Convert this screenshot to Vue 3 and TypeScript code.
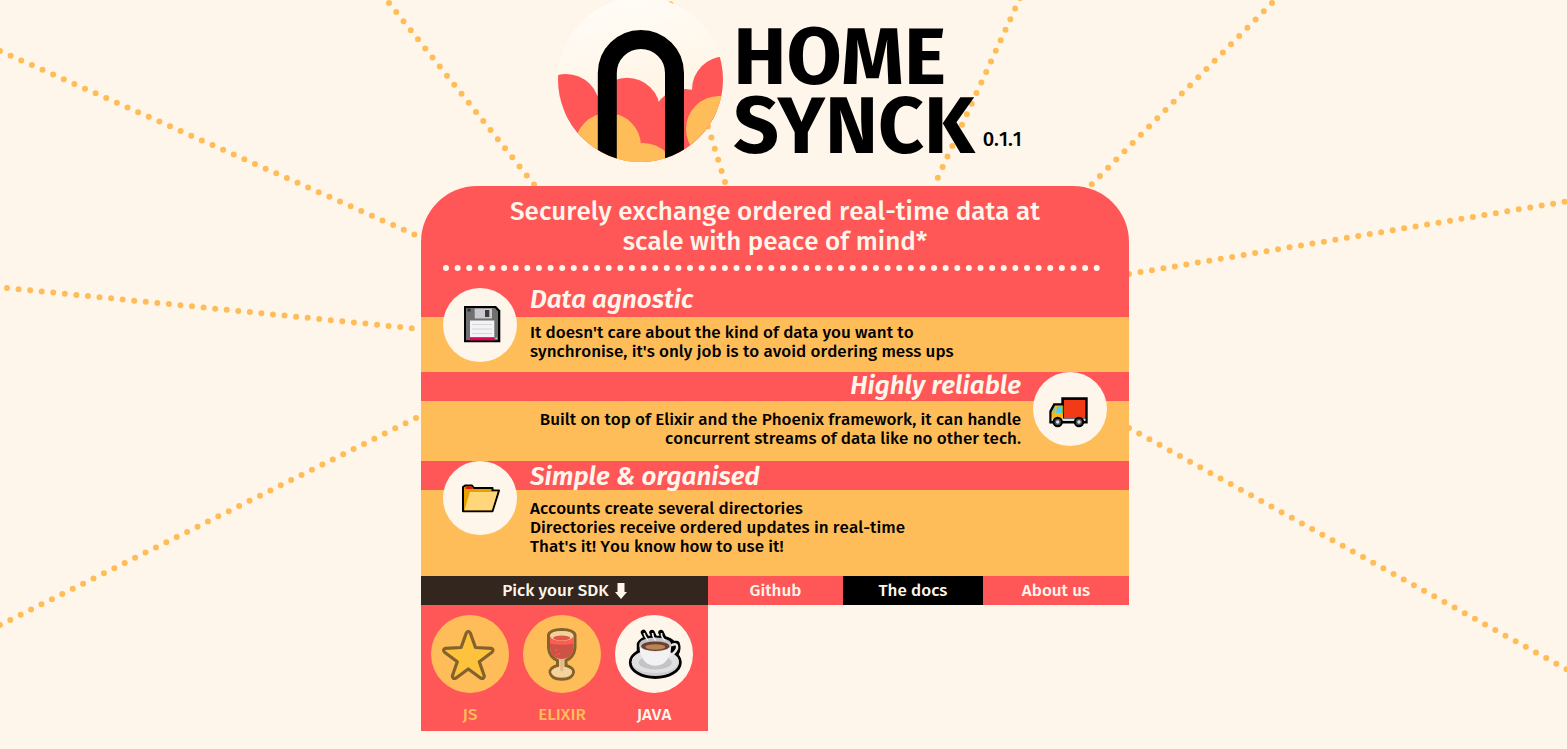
<script setup lang="ts">
import { ref } from 'vue'

interface Ray {
  x1: number
  y1: number
  x2: number
  y2: number
}

interface Feature {
  id: string
  title: string
  lines: string[]
}

interface Sdk {
  id: string
  label: string
}

const rays: Ray[] = [
  { x1: 0, y1: 51, x2: 420, y2: 237 },
  { x1: 7, y1: 288, x2: 420, y2: 329 },
  { x1: 416, y1: 418, x2: -6, y2: 628 },
  { x1: 389, y1: 3, x2: 540, y2: 192 },
  { x1: 725, y1: 182, x2: 668, y2: -4 },
  { x1: 1020, y1: -2, x2: 934, y2: 186 },
  { x1: 1272, y1: 3, x2: 1084, y2: 192 },
  { x1: 1129, y1: 274, x2: 1575, y2: 200 },
  { x1: 1129, y1: 428, x2: 1575, y2: 674 },
]

const features: Feature[] = [
  {
    id: 'agnostic',
    title: 'Data agnostic',
    lines: ["It doesn't care about the kind of data you want to", "synchronise, it's only job is to avoid ordering mess ups"],
  },
  {
    id: 'reliable',
    title: 'Highly reliable',
    lines: ['Built on top of Elixir and the Phoenix framework, it can handle', 'concurrent streams of data like no other tech.'],
  },
  {
    id: 'simple',
    title: 'Simple & organised',
    lines: ['Accounts create several directories', 'Directories receive ordered updates in real-time', "That's it! You know how to use it!"],
  },
]

const sdks: Sdk[] = [
  { id: 'js', label: 'JS' },
  { id: 'elixir', label: 'ELIXIR' },
  { id: 'java', label: 'JAVA' },
]

const open = ref(true)
const active = ref('java')
</script>

<template>
  <div class="page">
    <svg class="rays" viewBox="0 0 1567 749" preserveAspectRatio="xMidYMin slice" aria-hidden="true">
      <line v-for="(r, i) in rays" :key="i" :x1="r.x1" :y1="r.y1" :x2="r.x2" :y2="r.y2" />
    </svg>

    <header class="brand">
      <svg class="logo" viewBox="0 0 165 165" role="img" aria-label="Home Synck logo">
        <defs>
          <linearGradient id="sky" x1="0.4" y1="0" x2="0.6" y2="1">
            <stop offset="0" stop-color="#fffcf7" />
            <stop offset="0.5" stop-color="#fff6e8" />
          </linearGradient>
          <clipPath id="disc"><circle cx="82.5" cy="82.5" r="82.5" /></clipPath>
        </defs>
        <g clip-path="url(#disc)">
          <rect width="165" height="165" fill="url(#sky)" />
          <g fill="#ff5757">
            <circle cx="8" cy="110.5" r="33.5" />
            <circle cx="69" cy="114" r="33.2" />
            <circle cx="127" cy="126" r="34" />
            <circle cx="167" cy="92.5" r="33" />
            <rect y="115" width="165" height="50" />
          </g>
          <g fill="#ffbd59">
            <circle cx="50" cy="149" r="33" />
            <circle cx="85" cy="179" r="33" />
            <circle cx="161" cy="132" r="33" />
          </g>
          <path d="M49.3 170V76a33.6 33.6 0 0 1 67.2 0V170" fill="none" stroke="#000" stroke-width="19" />
        </g>
      </svg>
      <h1 class="name">HOME<br />SYNCK</h1>
      <span class="version">0.1.1</span>
    </header>

    <main class="panel">
      <section class="intro">
        <p class="tagline">Securely exchange ordered real-time data at scale with peace of mind*</p>
        <svg class="dots" aria-hidden="true"><line x1="3" y1="3" x2="100%" y2="3" /></svg>
      </section>

      <article v-for="f in features" :key="f.id" class="feature" :class="f.id">
        <div class="badge">
          <svg v-if="f.id === 'agnostic'" viewBox="0 0 74 74" aria-hidden="true">
            <path d="M21 18H53L57.300 22.500V54.300H21Z" fill="#000" />
            <path d="M23 20H52L55 23.500V52.300H23Z" fill="#707070" />
            <path d="M24.500 20.500h3v3h-3z" fill="#333" />
            <path d="M31.700 20.500H49v10H31.700z" fill="#c9c9cf" />
            <path d="M42 22h4.300v7H42z" fill="#3d3935" />
            <path d="M27 32.500h24.300v17H27z" fill="#f3f3f5" />
            <path d="M29 36.500h20M29 41h20M29 45.500h20" stroke="#d5d5da" stroke-width="1" />
            <path d="M27 49.300h24.300v3H27z" fill="#e5005c" />
            <path d="M52.500 49.500h1.500v1.500h-1.500z" fill="#ccc" />
          </svg>
          <svg v-else-if="f.id === 'reliable'" viewBox="0 0 74 74" aria-hidden="true">
            <path d="M28.300 25.300H54.700V51.600H16.300V39L20.500 31.300H28.300Z" fill="#000" />
            <path d="M31 28h21.300v18H31z" fill="#f23a17" />
            <path d="M22 33.500H30V47H18.500V40Z" fill="#fdb913" />
            <path d="M24 34.500h5.500v6.500H23z" fill="#50cdf5" />
            <path d="M21.500 35.500l1 0-1.500 5h-2z" fill="#50cdf5" />
            <path d="M29 34h1.300v8H29z" fill="#7ab51d" />
            <path d="M18.500 46.500H52.500V49H18.500z" fill="#dedede" />
            <g fill="#4b4b4b" stroke="#000" stroke-width="2">
              <circle cx="24.700" cy="50" r="4.200" />
              <circle cx="46" cy="50" r="4.200" />
            </g>
            <circle cx="24.700" cy="50" r="1.700" fill="#ddd" />
            <circle cx="46" cy="50" r="1.700" fill="#ddd" />
          </svg>
          <svg v-else viewBox="0 0 74 74" aria-hidden="true">
            <path d="M20 50.300V26l2-1.500h7l2 2.500h18.500v2.500H56L49.500 50.300Z" fill="#e8a200" stroke="#000" stroke-width="2" stroke-linejoin="round" />
            <path d="M22.500 25.500h6l1.500 2.500h-7.500z" fill="#e81224" />
            <path d="M27 31H48L50 30.500H54.500L48.800 49.300H21.500Z" fill="#ffd67a" />
          </svg>
        </div>
        <div class="copy">
          <h2>{{ f.title }}</h2>
          <p><span v-for="line in f.lines" :key="line">{{ line }}</span></p>
        </div>
      </article>

      <nav class="bar">
        <button type="button" class="pick" :aria-expanded="open" @click="open = !open">
          Pick your SDK
          <svg viewBox="0 0 12 16" aria-hidden="true"><path d="M2.500 0h7v9H12L6 16 0 9h2.500z" /></svg>
        </button>
        <a href="#github">Github</a>
        <a href="#docs" class="docs">The docs</a>
        <a href="#about">About us</a>
        <div v-if="open" class="sdks">
          <button
            v-for="s in sdks"
            :key="s.id"
            type="button"
            class="sdk"
            :class="{ active: s.id === active }"
            @click="active = s.id"
          >
            <span class="disc">
              <svg v-if="s.id === 'js'" viewBox="0 0 78 78" aria-hidden="true">
                <path d="M35.300 18Q37.300 14.500 39.300 18L44.500 32.500L60 33.300Q63.500 34.500 61 37.300L48.300 46.700L53.300 61Q53 64.500 49.500 63L37.300 54L25.100 63Q21.500 64.500 21.300 61L26.300 46.700L13.600 37.300Q11.100 34.500 14.600 33.300L30.100 32.500Z" fill="#ffc23c" stroke="#83622d" stroke-width="3.200" stroke-linejoin="round" />
              </svg>
              <svg v-else-if="s.id === 'elixir'" viewBox="0 0 78 78" aria-hidden="true">
                <path d="M25.500 20Q27 14.500 38.700 14.500Q50.500 14.500 52 20V33Q51 42 43 45.500V50.500Q50.500 52.500 50.500 57.500Q49 64.300 38.700 64.300Q28.500 64.300 27 57.500Q27 52.500 34.500 50.500V45.500Q26.500 42 25.500 33Z" fill="#f0c98e" stroke="#83622d" stroke-width="3" />
                <path d="M27 21H50.500V33Q49 44 38.700 44Q28.500 44 27 33Z" fill="#ff5c54" />
                <path d="M27 28.500Q38.700 31 50.500 28.500V33Q49 44 38.700 44Q28.500 44 27 33Z" fill="#ce5344" />
                <ellipse cx="38.700" cy="21" rx="11.700" ry="4.800" fill="#f2d19a" />
                <ellipse cx="38.700" cy="23" rx="8.500" ry="2.600" fill="#df5749" />
                <ellipse cx="38.700" cy="57" rx="10.500" ry="5" fill="#f5d39d" />
                <path d="M37.300 44h3v12h-3z" fill="#dfb988" />
                <g fill="#ff5757"><circle cx="33" cy="35" r="1" /><circle cx="36" cy="39" r="1" /><circle cx="33" cy="40" r="0.800" /></g>
              </svg>
              <svg v-else viewBox="0 0 78 78" aria-hidden="true">
                <g fill="#000" stroke="#000" stroke-width="5.500" stroke-linejoin="round" stroke-linecap="round">
                  <ellipse cx="40.300" cy="47.500" rx="23.700" ry="13.700" />
                  <path d="M24.500 40V29Q27 25 33 23.500H48Q55 25 58 28.500L62 28.500Q64 34 61 39L56 45H27Z" />
                  <path d="M28.500 17.500L32 24M37 17.500L40 24M46 17.500L49 24" />
                </g>
                <ellipse cx="40.300" cy="47.500" rx="23.700" ry="13.500" fill="#cfcfd2" />
                <ellipse cx="40.300" cy="46.500" rx="23.500" ry="11.500" fill="#e0e0e2" />
                <ellipse cx="40.300" cy="47.500" rx="16.500" ry="7" fill="#c4c4c7" />
                <path d="M56 30.500Q63 27 62 33.500Q60 38.500 53 42" fill="none" stroke="#e9e9eb" stroke-width="2.400" />
                <path d="M24.300 30Q24.500 43 32 48.500Q40.300 53 48.500 48.500Q56 43 56.300 30Z" fill="#f2f2f3" />
                <ellipse cx="40.300" cy="29.500" rx="16" ry="7" fill="#c2c4c8" />
                <ellipse cx="40.300" cy="31.200" rx="14" ry="4.800" fill="#6e3f2a" />
                <ellipse cx="40.300" cy="32" rx="10" ry="2.700" fill="#b98557" />
                <path d="M29 18Q30 22 33 25.500M37.500 18Q37.500 22 41 25.500M46.500 18Q46 22 50 25.500" fill="none" stroke="#eeeeef" stroke-width="1.600" />
              </svg>
            </span>
            <span class="label">{{ s.label }}</span>
          </button>
        </div>
      </nav>
    </main>
  </div>
</template>

<style>
body {
  margin: 0;
  background: #fff6eb;
}
</style>

<style scoped>
.page {
  position: relative;
  box-sizing: border-box;
  min-height: 100vh;
  padding: 0 17px 18px 0;
  overflow: hidden;
  color: #000;
  font-family: 'Fira Sans', 'Noto Sans', 'Open Sans', sans-serif;
  font-size: 17px;
  font-weight: 500;
  font-kerning: none;
}

.rays {
  position: absolute;
  inset: 0;
  width: 100%;
  height: 100%;
}

.rays line,
.dots line {
  stroke: #ffbd59;
  stroke-width: 6;
  stroke-linecap: round;
  stroke-dasharray: 0 11.62;
}

.brand {
  position: relative;
  display: flex;
  justify-content: center;
  align-items: flex-end;
  box-sizing: border-box;
  height: 186px;
  padding: 0 0 24px 30px;
}

.logo {
  flex: none;
  width: 165px;
  height: 165px;
  margin-right: 10px;
}

.name {
  margin: 0 0 1px;
  font-size: 80px;
  font-weight: 700;
  font-kerning: normal;
  line-height: 69px;
}

.version {
  margin: 0 0 9px 8px;
  font-size: 20px;
  line-height: 28px;
}

.panel {
  position: relative;
  width: 100%;
  max-width: 708px;
  margin: 0 auto;
}

.intro {
  padding: 11px 22px 17px;
  border-radius: 56px 56px 0 0;
  background: #ff5757;
}

.tagline {
  max-width: 560px;
  margin: 0 auto 8px;
  color: #fff6eb;
  font-size: 26px;
  line-height: 30px;
  text-align: center;
}

.dots {
  display: block;
  width: 100%;
  height: 6px;
}

.dots line {
  stroke: #fff6eb;
}

.feature {
  display: flex;
  gap: 13px;
  padding: 0 22px;
  background: linear-gradient(#ff5757 29px, #ffbd59 29px);
}

.badge {
  flex: none;
  width: 74px;
  height: 74px;
  border-radius: 50%;
  background: #fff6eb;
}

.badge svg,
.disc svg {
  display: block;
  width: 100%;
  height: 100%;
}

.copy {
  flex: 1;
}

.copy h2 {
  height: 29px;
  margin: 0;
  color: #fff6eb;
  font-size: 26px;
  font-style: italic;
  font-weight: 600;
  line-height: 24px;
}

.copy p {
  margin: 0;
  padding: 6px 0 11px;
  line-height: 19px;
}

.copy p span {
  display: block;
}

.reliable {
  flex-direction: row-reverse;
  gap: 12px;
  text-align: right;
}

.reliable h2 {
  line-height: 28px;
}

.reliable p {
  padding: 9px 0 13px;
}

.simple h2 {
  line-height: 32px;
}

.simple p {
  padding: 9px 0 20px;
}

.bar {
  display: grid;
  grid-template-columns: 287fr 135fr 140fr 146fr;
  line-height: 29px;
  text-align: center;
}

.bar a,
.pick {
  height: 29px;
  background: #ff5757;
  color: #fff6eb;
  text-decoration: none;
}

.bar .docs {
  background: #000;
}

.bar button {
  border: 0;
  padding: 0;
  font: inherit;
  font-kerning: none;
  cursor: pointer;
}

.bar .pick {
  display: flex;
  align-items: center;
  justify-content: center;
  gap: 6px;
  background: #33261f;
}

.pick svg {
  width: 12px;
  height: 16px;
  fill: #fff6eb;
}

.sdks {
  display: flex;
  gap: 14px;
  box-sizing: border-box;
  height: 126px;
  padding: 10px;
  background: #ff5757;
}

.bar .sdk {
  display: flex;
  flex-direction: column;
  align-items: center;
  gap: 12px;
  width: 78px;
  background: none;
  color: #ffbd59;
  line-height: 20px;
}

.disc {
  flex: none;
  width: 78px;
  height: 78px;
  border-radius: 50%;
  background: #ffbd59;
}

.bar .active {
  color: #fff6eb;
}

.active .disc {
  background: #fff6eb;
}
</style>
